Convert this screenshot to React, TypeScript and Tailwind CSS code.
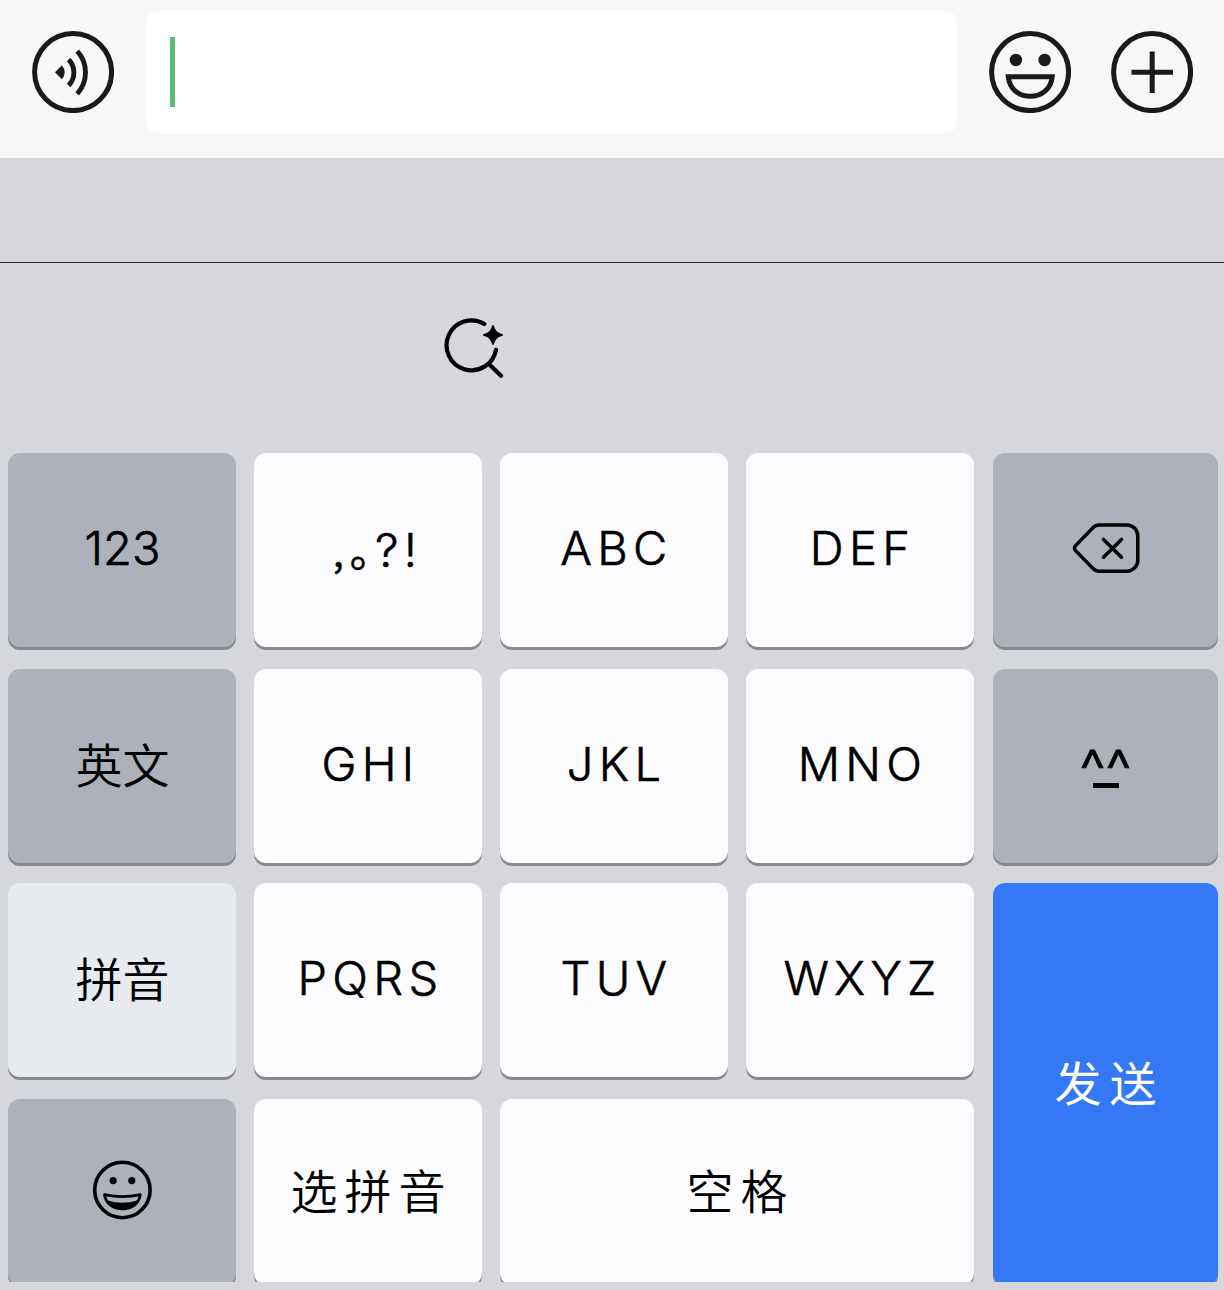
import React from 'react';
import clsx from 'clsx';

type Tone = 'light' | 'dark' | 'pale' | 'blue';

interface KeyProps {
  tone?: Tone;
  className?: string;
  children: React.ReactNode;
}

const tones: Record<Tone, string> = {
  light: 'bg-[#fcfcfe] text-black',
  dark: 'bg-[#adb1ba] text-black',
  pale: 'bg-[#e7eaef] text-black',
  blue: 'bg-[#3478f5] text-white',
};

function Key({ tone = 'light', className = 'h-[194px]', children }: KeyProps) {
  return (
    <button
      className={clsx(
        'flex items-center justify-center rounded-xl pb-1 shadow-[0_3px_0_#88898d] whitespace-nowrap',
        tones[tone],
        className
      )}
    >
      {children}
    </button>
  );
}

function Letters({ children }: { children: string }) {
  return (
    <span className="pb-0.5 pl-[5px] font-light tracking-[5.3px] [-webkit-text-stroke:0.6px_black]">
      {children}
    </span>
  );
}

function VoiceIcon() {
  return (
    <svg className="w-[82px] h-[82px] shrink-0" viewBox="0 0 82 82" fill="none" stroke="#1a1a1a" strokeWidth="5">
      <circle cx="41.1" cy="41.1" r="38.5" />
      <path d="M23 41.2 29.9 34.2Q35.6 41.2 29.9 48.2Z" fill="#1a1a1a" stroke="none" />
      <path d="M36.6 28.5A18.6 18.6 0 0 1 36.6 54.5" strokeWidth="4.9" />
      <path d="M45.2 20.2A31.5 31.5 0 0 1 45.2 62.8" strokeWidth="4.9" />
    </svg>
  );
}

function SmileIcon() {
  return (
    <svg className="w-[82px] h-[82px] shrink-0" viewBox="0 0 82 82" fill="none" stroke="#1a1a1a" strokeWidth="5">
      <circle cx="41.1" cy="41.1" r="38.5" />
      <circle cx="26.9" cy="29" r="6.2" fill="#1a1a1a" stroke="none" />
      <circle cx="55.6" cy="29" r="6.2" fill="#1a1a1a" stroke="none" />
      <path d="M19.3 45.7H63.2C62 58 52.7 65.3 41.2 65.3S20.5 58 19.3 45.7Z" />
    </svg>
  );
}

function PlusIcon() {
  return (
    <svg className="w-[82px] h-[82px] shrink-0" viewBox="0 0 82 82" fill="none" stroke="#1a1a1a" strokeWidth="5">
      <circle cx="41.1" cy="41.1" r="38.5" />
      <path d="M20.5 41.2H62M41.2 20.5V62" />
    </svg>
  );
}

function SearchSparkIcon() {
  return (
    <svg className="w-16 h-16" viewBox="0 0 64 64" fill="none" stroke="#000" strokeWidth="4.2" strokeLinecap="round">
      <path d="M42.3 8A24.9 24.9 0 1 0 54 33.8M47.2 48.2 59 59.7" />
      <path
        d="M51 10C52.6 15.6 54.6 17.4 60.2 19C54.6 20.6 52.6 22.4 51 28C49.4 22.4 47.4 20.6 41.8 19C47.4 17.4 49.4 15.6 51 10Z"
        fill="#000"
        strokeWidth="1.8"
        strokeLinejoin="round"
      />
    </svg>
  );
}

function BackspaceIcon() {
  return (
    <svg
      className="ml-0.5 w-[69px] h-[52px]"
      viewBox="0 0 69 52"
      fill="none"
      stroke="#000"
      strokeWidth="3.5"
      strokeLinecap="round"
      strokeLinejoin="round"
    >
      <path d="M27.5 3H54.5A11 11 0 0 1 65.8 14V38.2A11 11 0 0 1 54.5 49.2H27.5C25 49.2 22.8 48.3 21 46.5L3.6 28.6C2.2 27 2.2 25.2 3.6 23.6L21 5.7C22.8 3.9 25 3 27.5 3Z" />
      <path d="M31.5 17.4 49.5 35.2M49.5 17.4 31.5 35.2" />
    </svg>
  );
}

function EmojiIcon() {
  return (
    <svg className="w-[60px] h-[60px]" viewBox="0 0 60 60" fill="none" stroke="#000" strokeWidth="3.6">
      <circle cx="30.4" cy="30" r="27.7" />
      <circle cx="21.2" cy="20.6" r="3.6" fill="#000" stroke="none" />
      <circle cx="39.8" cy="20.6" r="3.6" fill="#000" stroke="none" />
      <path d="M12.5 34.6Q30.4 38.8 48.3 34.6C47.1 43.5 39.8 48.9 30.4 48.9S13.7 43.5 12.5 34.6Z" strokeWidth="2.8" strokeLinejoin="round" />
      <path d="M15 40.2Q30.4 45.2 45.8 40.2C42.7 46.5 37.2 49 30.4 49S18.2 46.5 15 40.2Z" fill="#000" stroke="none" />
    </svg>
  );
}

export default function App() {
  return (
    <div className="w-[1224px] h-[1290px] overflow-hidden bg-[#d5d7dc] font-['Inter','Noto_Sans_CJK_SC',sans-serif] text-[47px] leading-none">
      {/* Message bar */}
      <div className="flex h-[158px] bg-[#f7f7f7] pl-8 pt-[11px]">
        <div className="flex h-[122px] items-center">
          <VoiceIcon />
          <div className="mx-8 h-[122px] w-[811px] rounded-xl bg-white pl-6 pt-[26px]">
            <div className="h-[70px] w-[5px] bg-[#5fbb6c]" />
          </div>
          <SmileIcon />
          <div className="w-10" />
          <PlusIcon />
        </div>
      </div>

      {/* Keyboard toolbar */}
      <div className="h-[105px] border-b border-[#2c2c30]" />
      <div className="h-[190px] pl-[442px] pt-[53px]">
        <SearchSparkIcon />
      </div>

      {/* Keys */}
      <div className="ml-2 grid h-[829px] w-[1216px] grid-cols-[228px_228px_228px_228px_226px] grid-rows-[216px_214px_216px_183px] items-start gap-x-[18px] overflow-hidden">
        <Key tone="dark">
          <span className="pb-0.5 pl-px font-light [-webkit-text-stroke:0.6px_black]">123</span>
        </Key>
        <Key>
          <span className="flex items-baseline pl-[14px] pt-0.5 font-light [-webkit-text-stroke:0.6px_black]">
            <span className="font-['Noto_Sans_CJK_SC'] text-[38px] font-normal [font-feature-settings:'halt']">,</span>
            <span className="ml-[6px] font-['Noto_Sans_CJK_SC'] text-[42px] font-normal [font-feature-settings:'halt']">。</span>
            <span className="-ml-px w-[34px]">?</span>
            <span>!</span>
          </span>
        </Key>
        <Key>
          <Letters>ABC</Letters>
        </Key>
        <Key>
          <Letters>DEF</Letters>
        </Key>
        <Key tone="dark" className="ml-px h-[194px]">
          <BackspaceIcon />
        </Key>

        <Key tone="dark">
          <span className="pl-px pt-0.5 font-[350]">英文</span>
        </Key>
        <Key>
          <Letters>GHI</Letters>
        </Key>
        <Key>
          <Letters>JKL</Letters>
        </Key>
        <Key>
          <Letters>MNO</Letters>
        </Key>
        <Key tone="dark" className="ml-px h-[194px]">
          <span className="flex flex-col items-center">
            <span className="h-[42px] text-[58px] leading-[58px] font-light [-webkit-text-stroke:0.9px_black]">^^</span>
            <span className="ml-0.5 h-[5px] w-[26px] bg-black" />
          </span>
        </Key>

        <Key tone="pale">
          <span className="pl-px pt-0.5 font-[350]">拼音</span>
        </Key>
        <Key>
          <Letters>PQRS</Letters>
        </Key>
        <Key>
          <Letters>TUV</Letters>
        </Key>
        <Key>
          <Letters>WXYZ</Letters>
        </Key>
        <Key tone="blue" className="ml-px h-[402px] row-span-2">
          <span className="tracking-[8px] pl-[8px] pt-0.5 font-normal">发送</span>
        </Key>

        <Key tone="dark" className="h-[186px]">
          <EmojiIcon />
        </Key>
        <Key className="h-[186px]">
          <span className="tracking-[7px] pl-[7px] pt-0.5 font-[350]">选拼音</span>
        </Key>
        <Key className="col-span-2 h-[186px]">
          <span className="tracking-[7px] pl-[7px] pt-0.5 font-[350]">空格</span>
        </Key>
      </div>
    </div>
  );
}
